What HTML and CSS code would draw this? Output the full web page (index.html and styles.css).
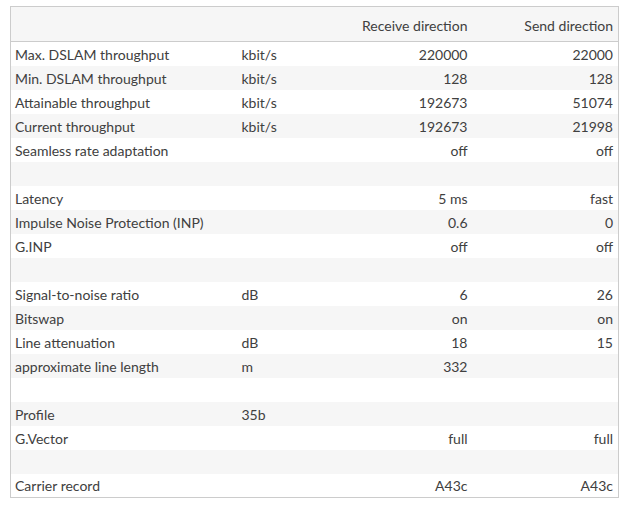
FILE: index.html
```html
<!DOCTYPE html>
<html>
<head>
<meta charset="utf-8">
<link rel="stylesheet" href="styles.css">
</head>
<body>
<table class="dsl">
  <colgroup>
    <col class="c-label">
    <col class="c-unit">
    <col class="c-rx">
    <col class="c-tx">
  </colgroup>
  <thead>
    <tr><th></th><th></th><th class="num">Receive direction</th><th class="num">Send direction</th></tr>
  </thead>
  <tbody>
    <tr><td>Max. DSLAM throughput</td><td>kbit/s</td><td class="num">220000</td><td class="num">22000</td></tr>
    <tr><td>Min. DSLAM throughput</td><td>kbit/s</td><td class="num">128</td><td class="num">128</td></tr>
    <tr><td>Attainable throughput</td><td>kbit/s</td><td class="num">192673</td><td class="num">51074</td></tr>
    <tr><td>Current throughput</td><td>kbit/s</td><td class="num">192673</td><td class="num">21998</td></tr>
    <tr><td>Seamless rate adaptation</td><td></td><td class="num">off</td><td class="num">off</td></tr>
    <tr><td></td><td></td><td></td><td></td></tr>
    <tr><td>Latency</td><td></td><td class="num">5 ms</td><td class="num">fast</td></tr>
    <tr><td>Impulse Noise Protection (INP)</td><td></td><td class="num">0.6</td><td class="num">0</td></tr>
    <tr><td>G.INP</td><td></td><td class="num">off</td><td class="num">off</td></tr>
    <tr><td></td><td></td><td></td><td></td></tr>
    <tr><td>Signal-to-noise ratio</td><td>dB</td><td class="num">6</td><td class="num">26</td></tr>
    <tr><td>Bitswap</td><td></td><td class="num">on</td><td class="num">on</td></tr>
    <tr><td>Line attenuation</td><td>dB</td><td class="num">18</td><td class="num">15</td></tr>
    <tr><td>approximate line length</td><td>m</td><td class="num">332</td><td class="num"></td></tr>
    <tr><td></td><td></td><td></td><td></td></tr>
    <tr><td>Profile</td><td>35b</td><td class="num"></td><td class="num"></td></tr>
    <tr><td>G.Vector</td><td></td><td class="num">full</td><td class="num">full</td></tr>
    <tr><td></td><td></td><td></td><td></td></tr>
    <tr><td>Carrier record</td><td></td><td class="num">A43c</td><td class="num">A43c</td></tr>
  </tbody>
</table>
</body>
</html>
```
FILE: styles.css
```css
html, body {
  margin: 0;
  padding: 0;
  background: #ffffff;
}
body {
  padding: 6px 0 0 10px;
  font-family: "Lato", "Liberation Sans", sans-serif;
  font-size: 14px;
  color: #404040;
}
.dsl {
  border-collapse: collapse;
  table-layout: fixed;
  width: 608px;
  border: 1px solid #cccccc;
}
.c-label { width: 227px; }
.c-unit { width: 100px; }
.c-rx { width: 135px; }
.c-tx { width: 146px; }
.dsl th {
  height: 35px;
  padding: 2px 5px 0 4px;
  background: #f6f6f6;
  border-bottom: 1px solid #cccccc;
  font-weight: normal;
  text-align: left;
  box-sizing: border-box;
}
.dsl td {
  height: 24px;
  padding: 1px 5px 0 4px;
  box-sizing: border-box;
  white-space: nowrap;
  text-align: left;
}
.dsl .num { text-align: right; }
.dsl tbody tr:nth-child(even) td { background: #f6f6f6; }
```
